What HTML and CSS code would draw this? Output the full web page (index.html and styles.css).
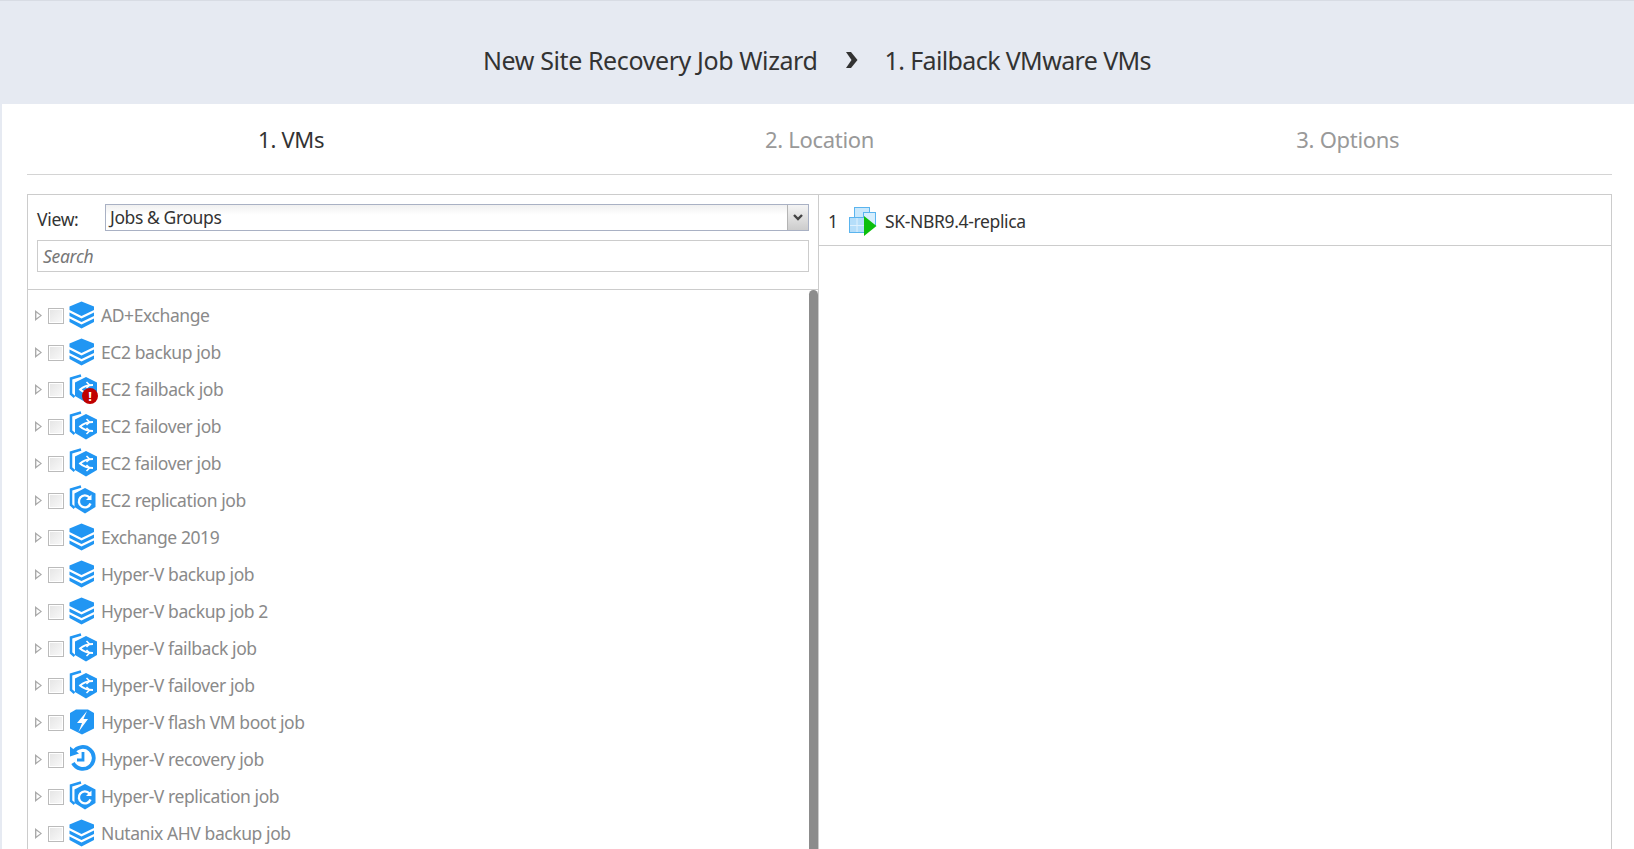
FILE: index.html
```html
<!DOCTYPE html>
<html lang="en">
<head>
    <meta charset="UTF-8">
    <meta name="viewport" content="width=device-width, initial-scale=1.0">
    <title>New Site Recovery Job Wizard</title>
    <link rel="stylesheet" href="styles.css">
</head>
<body>

    <!-- Shared job icons -->
    <svg class="defs" width="0" height="0">
        <symbol id="i-stack" viewBox="0 0 30 30">
            <path d="M13.500 1.500 L26 6.500 V10 L13.500 16 L1.500 10 V6.500Z" fill="#2196f3"/>
            <path d="M1.500 12.500 L13.500 18.500 L26 12.500 V16 L13.500 22 L1.500 16Z" fill="#2196f3"/>
            <path d="M1.500 18.500 L13.500 24.500 L26 18.500 V22 L13.500 28.500 L1.500 22Z" fill="#2196f3"/>
        </symbol>
        <symbol id="i-failover" viewBox="0 0 30 30">
            <path d="M13 1.500 L3 4.500 V20 L6.500 23" fill="none" stroke="#2196f3" stroke-width="2.500"/>
            <path d="M18 3 L29 8.500 V22 L18 28.500 L7 22 V8.500Z" fill="#2196f3"/>
            <path d="M25 11 Q17 11 12 15.500 Q17 20 25 20" fill="none" stroke="#fff" stroke-width="1.800"/>
            <path d="M18.500 8 L21.500 11 L18.500 14" fill="none" stroke="#fff" stroke-width="1.600"/>
            <path d="M18.500 17 L21.500 20 L18.500 23" fill="none" stroke="#fff" stroke-width="1.600"/>
        </symbol>
        <symbol id="i-replica" viewBox="0 0 30 30">
            <path d="M13 1.500 L3 4.500 V20 L6.500 23" fill="none" stroke="#2196f3" stroke-width="2.500"/>
            <path d="M17 3 L27.500 8.500 V22 L17 28.500 L6.500 22 V8.500Z" fill="#2196f3"/>
            <path d="M21.500 12.500 A6 6 0 1 0 22.500 18.500" fill="none" stroke="#fff" stroke-width="2.400"/>
            <path d="M23.500 9.500 V15 H18Z" fill="#fff"/>
        </symbol>
        <symbol id="i-flash" viewBox="0 0 30 30">
            <path d="M8 2.500 H20 L26 6 V21.500 L14 27.500 L2 21.500 V6Z" fill="#2196f3"/>
            <path d="M19 4 L9 16 H14 L10.500 25 L20 12 H15.500Z" fill="#fff"/>
        </symbol>
        <symbol id="i-recovery" viewBox="0 0 30 30">
            <path d="M5.500 8 A11 11 0 1 1 5 19" fill="none" stroke="#2196f3" stroke-width="3.800"/>
            <path d="M2 2.500 L11 9.500 L2 12.500Z" fill="#2196f3"/>
            <path d="M15 8 V16 H9" fill="none" stroke="#2196f3" stroke-width="2.800"/>
        </symbol>
    </svg>

    <div class="wizard-title">
        <span>New Site Recovery Job Wizard</span>
        <svg class="crumb" width="13" height="18" viewBox="0 0 13 18"><path d="M1 1 H6 L12.500 9 L6 17 H1 L6.500 9Z" fill="#333"/></svg>
        <span class="title-step">1. Failback VMware VMs</span>
    </div>

    <div class="wizard-body">
        <div class="steps">
            <div class="step active">1. VMs</div>
            <div class="step">2. Location</div>
            <div class="step">3. Options</div>
        </div>

        <div class="panels">
            <div class="left-panel">
                <div class="filters">
                    <div class="view-row">
                        <label class="view-label">View:</label>
                        <div class="view-select">
                            <span class="view-value">Jobs &amp; Groups</span>
                            <span class="view-arrow">
                                <svg width="10" height="7" viewBox="0 0 10 7"><path d="M1 1 L5 5 L9 1" fill="none" stroke="#444" stroke-width="2.400"/></svg>
                            </span>
                        </div>
                    </div>
                    <div class="search">Search</div>
                </div>
                <div class="tree-wrap">
                    <div class="scrollbar"></div>
                    <div class="tree">
                        <div class="row"><i class="expander"></i><i class="check"></i><svg class="job-icon"><use href="#i-stack"/></svg><span>AD+Exchange</span></div>
                        <div class="row"><i class="expander"></i><i class="check"></i><svg class="job-icon"><use href="#i-stack"/></svg><span>EC2 backup job</span></div>
                        <div class="row">
                            <i class="expander"></i><i class="check"></i>
                            <span class="icon-wrap">
                                <svg class="job-icon"><use href="#i-failover"/></svg>
                                <span class="badge">!</span>
                            </span>
                            <span>EC2 failback job</span>
                        </div>
                        <div class="row"><i class="expander"></i><i class="check"></i><svg class="job-icon"><use href="#i-failover"/></svg><span>EC2 failover job</span></div>
                        <div class="row"><i class="expander"></i><i class="check"></i><svg class="job-icon"><use href="#i-failover"/></svg><span>EC2 failover job</span></div>
                        <div class="row"><i class="expander"></i><i class="check"></i><svg class="job-icon"><use href="#i-replica"/></svg><span>EC2 replication job</span></div>
                        <div class="row"><i class="expander"></i><i class="check"></i><svg class="job-icon"><use href="#i-stack"/></svg><span>Exchange 2019</span></div>
                        <div class="row"><i class="expander"></i><i class="check"></i><svg class="job-icon"><use href="#i-stack"/></svg><span>Hyper-V backup job</span></div>
                        <div class="row"><i class="expander"></i><i class="check"></i><svg class="job-icon"><use href="#i-stack"/></svg><span>Hyper-V backup job 2</span></div>
                        <div class="row"><i class="expander"></i><i class="check"></i><svg class="job-icon"><use href="#i-failover"/></svg><span>Hyper-V failback job</span></div>
                        <div class="row"><i class="expander"></i><i class="check"></i><svg class="job-icon"><use href="#i-failover"/></svg><span>Hyper-V failover job</span></div>
                        <div class="row"><i class="expander"></i><i class="check"></i><svg class="job-icon"><use href="#i-flash"/></svg><span>Hyper-V flash VM boot job</span></div>
                        <div class="row"><i class="expander"></i><i class="check"></i><svg class="job-icon"><use href="#i-recovery"/></svg><span>Hyper-V recovery job</span></div>
                        <div class="row"><i class="expander"></i><i class="check"></i><svg class="job-icon"><use href="#i-replica"/></svg><span>Hyper-V replication job</span></div>
                        <div class="row"><i class="expander"></i><i class="check"></i><svg class="job-icon"><use href="#i-stack"/></svg><span>Nutanix AHV backup job</span></div>
                    </div>
                </div>
            </div>

            <div class="right-panel">
                <div class="selected-row">
                    <span class="selected-num">1</span>
                    <svg class="vm-icon" width="28" height="29" viewBox="0 0 28 29">
                        <rect x="5.500" y="0.500" width="15" height="14" fill="#c9e8fc" stroke="#5ab4ee"/>
                        <rect x="14.500" y="5.500" width="12" height="13" fill="#d6eefd" stroke="#5ab4ee"/>
                        <rect x="0.500" y="10.500" width="15" height="15" fill="#b5defa" stroke="#5ab4ee"/>
                        <path d="M1 18.500 H15 M8 11 V25" stroke="#dff1fe" stroke-width="1"/>
                        <path d="M15 9 L27.500 19 L15 29Z" fill="#0cbf0c"/>
                    </svg>
                    <span>SK-NBR9.4-replica</span>
                </div>
            </div>
        </div>
    </div>

</body>
</html>
```

FILE: styles.css
```css
* {
    margin: 0;
    padding: 0;
    box-sizing: border-box;
}
html, body {
    height: 849px;
    overflow: hidden;
}
body {
    font-family: 'Noto Sans', 'Liberation Sans', sans-serif;
    background-color: #e6eaf2;
    color: #333;
    display: flex;
    flex-direction: column;
}
.defs {
    position: absolute;
}
.wizard-title {
    height: 104px;
    flex: none;
    display: flex;
    justify-content: center;
    align-items: center;
    gap: 27px;
    font-size: 25px;
    letter-spacing: -0.4px;
    padding-top: 14px;
    border-top: 1px solid #d8dce4;
}
.title-step {
    letter-spacing: -0.62px;
}
.wizard-body {
    flex: 1;
    background-color: #fff;
    margin-left: 2px;
    padding: 0 22px 0 25px;
    min-height: 0;
    display: flex;
    flex-direction: column;
}
.steps {
    display: flex;
    height: 71px;
    flex: none;
    border-bottom: 1px solid #d4d4d4;
}
.step {
    flex: 1;
    text-align: center;
    font-size: 22px;
    letter-spacing: -0.3px;
    line-height: 70px;
    color: #999;
}
.step.active {
    color: #333;
}
.panels {
    flex: 1;
    min-height: 0;
    display: flex;
    margin-top: 19px;
    border: 1px solid #ccc;
    border-bottom: none;
}
.left-panel {
    width: 791px;
    flex: none;
    display: flex;
    flex-direction: column;
    border-right: 1px solid #ccc;
    min-height: 0;
}
.filters {
    height: 95px;
    flex: none;
    padding: 9px 9px 0 9px;
    border-bottom: 1px solid #ccc;
}
.view-row {
    display: flex;
    align-items: center;
    height: 27px;
}
.view-label {
    width: 68px;
    font-size: 17.500px;
    letter-spacing: -0.3px;
    padding-top: 2px;
}
.view-select {
    flex: 1;
    height: 27px;
    display: flex;
    justify-content: space-between;
    border: 1px solid #a9b1c4;
    background: linear-gradient(#f0f0f0, #fff 40%);
    font-size: 17.500px;
    letter-spacing: -0.4px;
    line-height: 25px;
    padding-left: 4px;
}
.view-arrow {
    width: 21px;
    display: flex;
    justify-content: center;
    align-items: center;
    background: linear-gradient(#f4f4f4, #cccccc);
    border-left: 1px solid #b4b4b4;
}
.search {
    height: 32px;
    margin-top: 9px;
    border: 1px solid #ccc;
    font-size: 17.500px;
    letter-spacing: -0.3px;
    font-style: italic;
    line-height: 30px;
    color: #777;
    padding-left: 5px;
}
.tree-wrap {
    flex: 1;
    min-height: 0;
    position: relative;
    overflow: hidden;
}
.scrollbar {
    position: absolute;
    top: 0;
    right: 0;
    width: 9px;
    height: 600px;
    background-color: #8c8c8c;
    border-radius: 5px 5px 0 0;
}
.tree {
    padding-top: 7px;
}
.row {
    height: 37px;
    display: flex;
    align-items: center;
    font-size: 17.500px;
    letter-spacing: -0.42px;
    color: #8a8a8a;
    padding-left: 7px;
    padding-bottom: 2px;
}
.expander {
    width: 7px;
    height: 11px;
    flex: none;
    margin-top: 2px;
    background-color: #aaa;
    clip-path: polygon(0 0, 100% 50%, 0 100%, 0 0, 20% 25%, 20% 75%, 75% 50%, 20% 25%);
}
.check {
    width: 16px;
    height: 16px;
    flex: none;
    margin-left: 6px;
    margin-top: 2px;
    border: 1px solid #bbb;
    background: linear-gradient(135deg, #e4e4e4, #fafafa);
    box-shadow: inset 0 0 0 1px #fff;
}
.job-icon {
    width: 30px;
    height: 30px;
    flex: none;
    margin-left: 4px;
    margin-right: 3px;
    display: block;
}
.icon-wrap {
    position: relative;
    display: block;
    flex: none;
}
.badge {
    position: absolute;
    left: 18px;
    top: 14px;
    width: 16px;
    height: 16px;
    border-radius: 50%;
    background-color: #c00000;
    color: #fff;
    font-size: 13px;
    font-weight: bold;
    letter-spacing: 0;
    line-height: 16px;
    text-align: center;
}
.right-panel {
    flex: 1;
    min-width: 0;
}
.selected-row {
    height: 51px;
    display: flex;
    align-items: center;
    padding-left: 9px;
    padding-top: 2px;
    font-size: 17.500px;
    letter-spacing: -0.35px;
    border-bottom: 1px solid #ccc;
}
.selected-num {
    width: 21px;
}
.vm-icon {
    margin-right: 8px;
}
```
